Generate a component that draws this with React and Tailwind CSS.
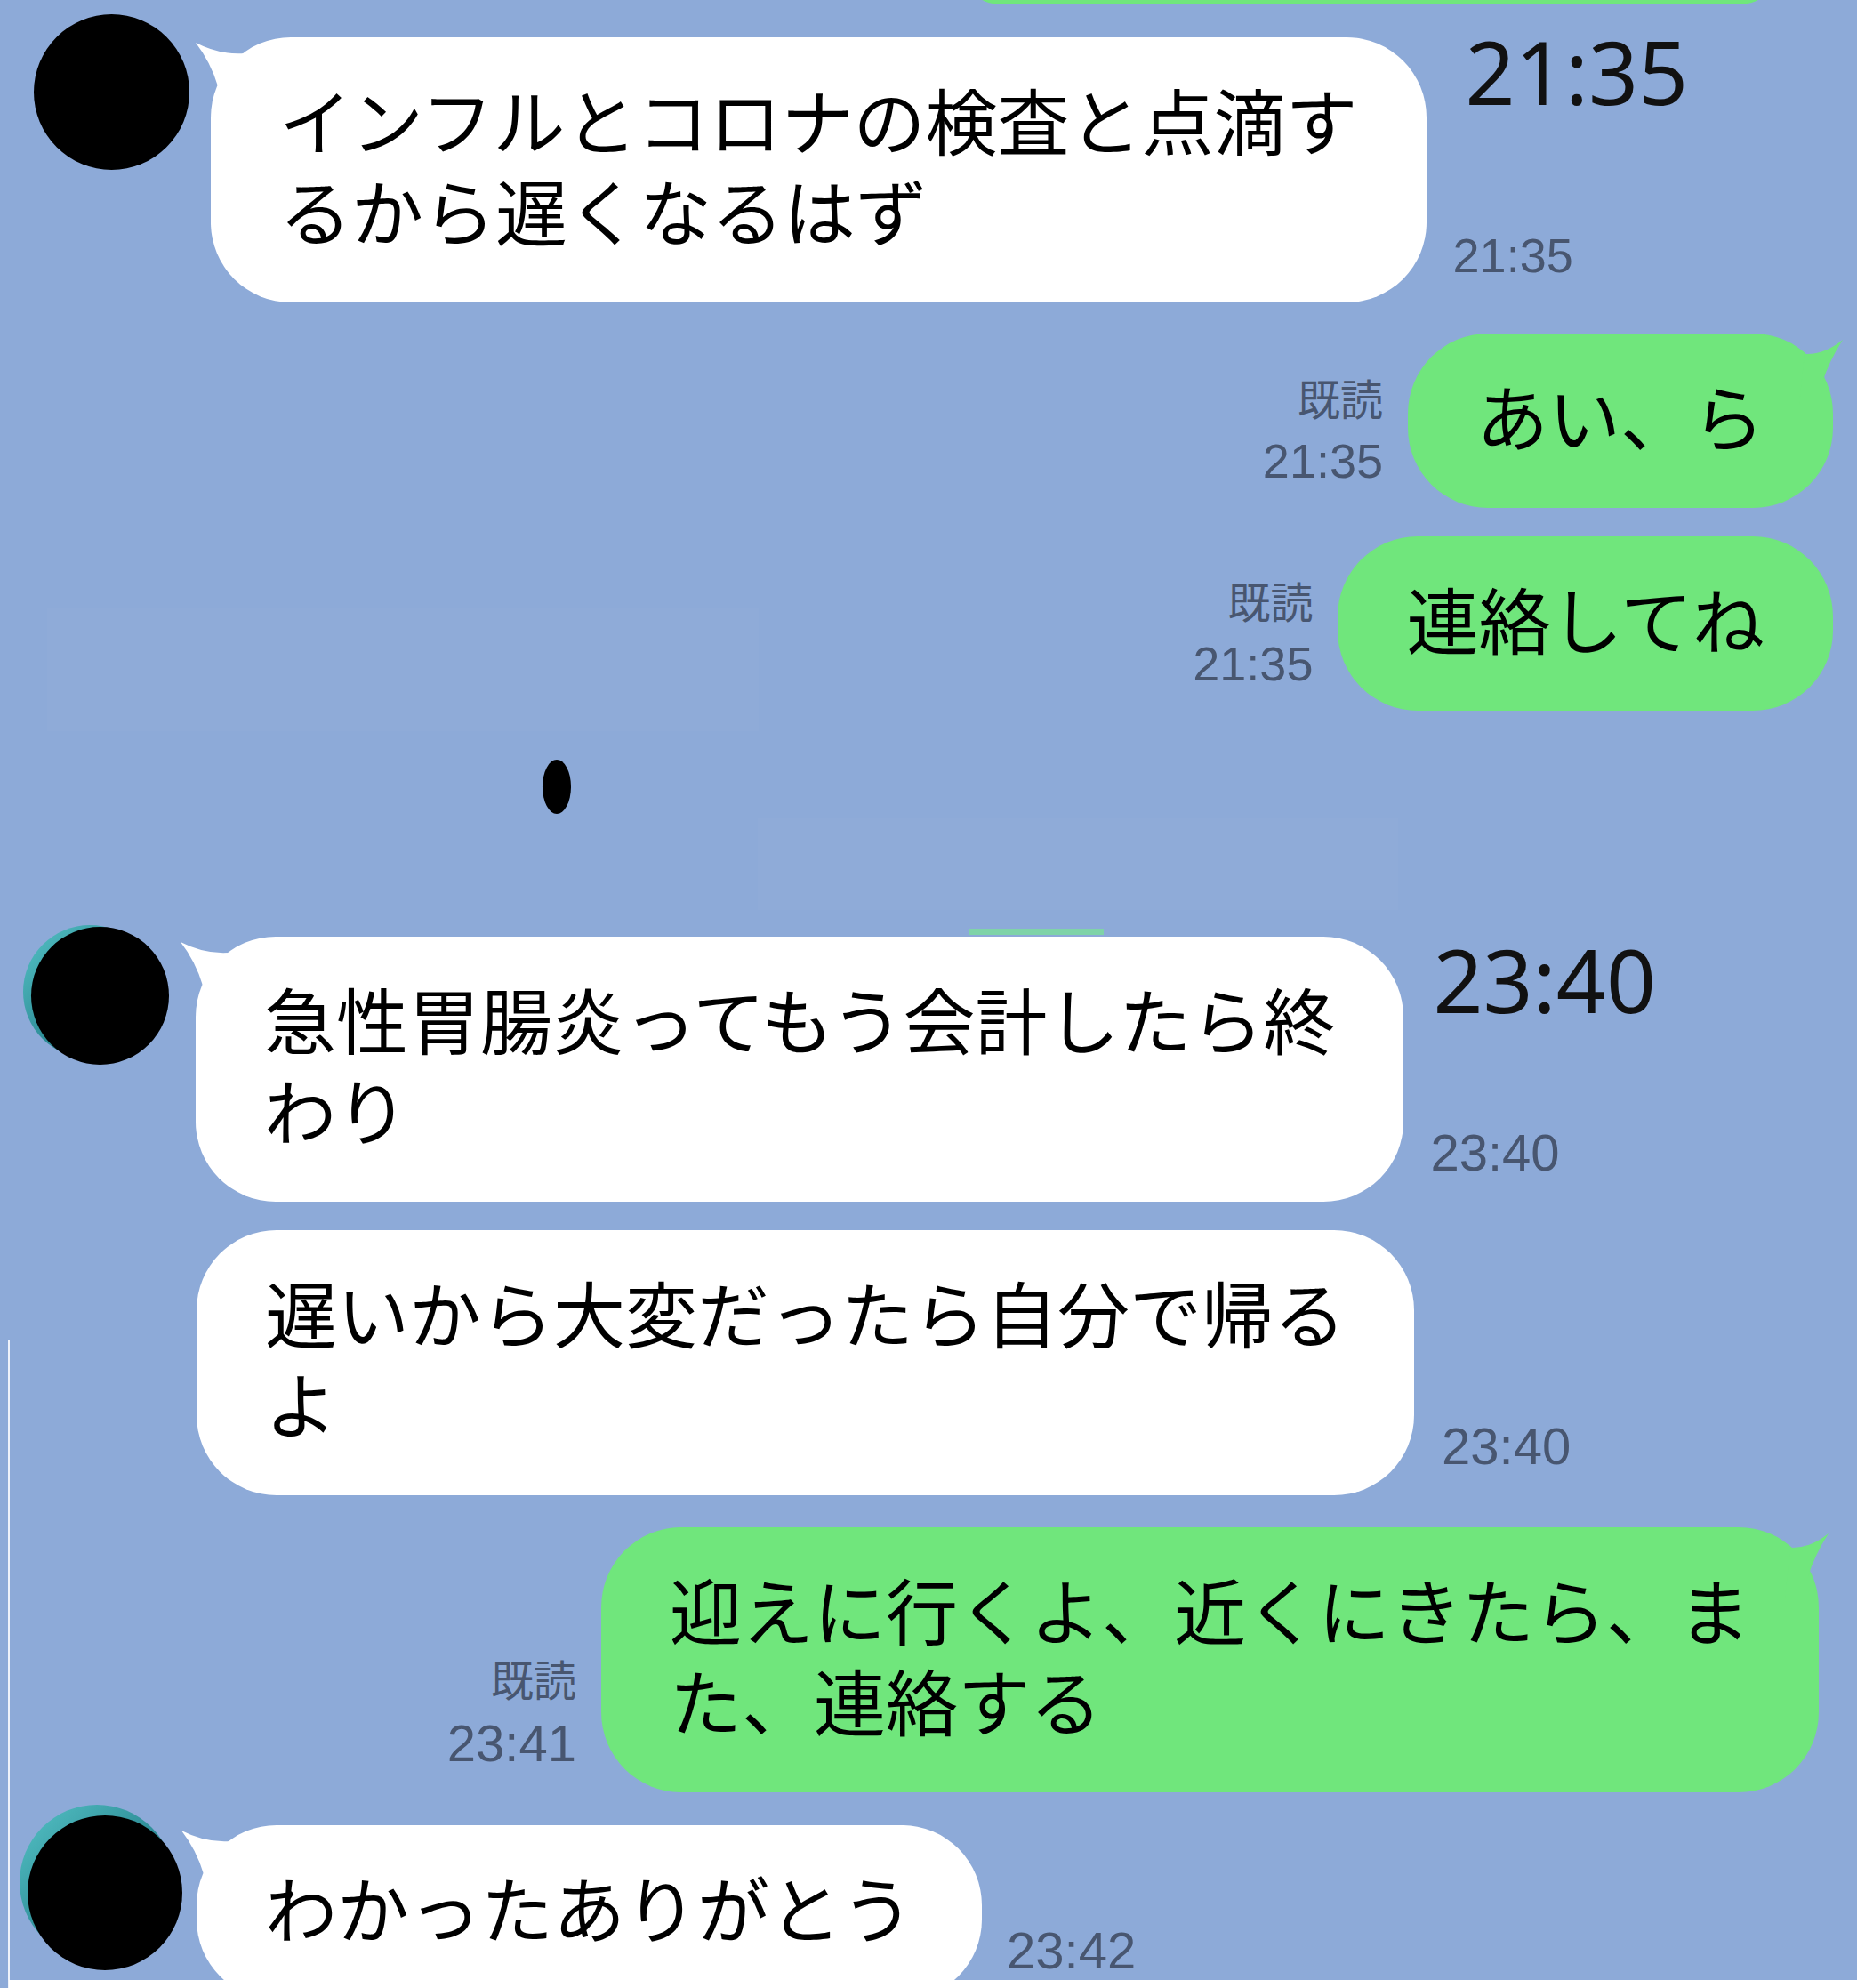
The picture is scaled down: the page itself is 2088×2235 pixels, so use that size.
import React from 'react';

const JP = "font-['Noto_Sans_CJK_JP','Noto_Sans',sans-serif]";

// little curved tail on the first bubble of a group
const Tail = ({ side }) =>
  side === 'left' ? (
    <svg className="absolute -left-[18px] top-0 overflow-visible" width="110" height="100" viewBox="0 0 110 100">
      <path d="M1,6 Q28,20 56,18 L60,80 L26,80 L26,55 Q18,28 1,6 Z" fill="#ffffff" />
    </svg>
  ) : (
    <svg className="absolute -right-[12px] top-0 overflow-visible" width="110" height="100" viewBox="0 0 110 100">
      <path d="M109,7 Q88,24 66,23 L60,80 L86,80 L86,55 Q94,30 109,7 Z" fill="#70e67c" />
    </svg>
  );

const Bubble = ({ lines, green, tail }) => (
  <div
    className={`relative shrink-0 rounded-[90px] px-[77px] pt-[40px] pb-[54px] text-[81px] leading-[102px] text-black whitespace-nowrap ${JP} ${
      green ? 'bg-[#70e67c]' : 'bg-white'
    }`}
  >
    {tail && <Tail side={green ? 'right' : 'left'} />}
    <p>
      {lines.map((l, i) => (
        <React.Fragment key={l}>
          {i > 0 && <br />}
          {l}
        </React.Fragment>
      ))}
    </p>
  </div>
);

const SmallTime = ({ children, big }) => (
  <div
    className={`mb-[26px] font-['Liberation_Sans',sans-serif] leading-none text-[#485670] ${
      big ? 'text-[58px]' : 'text-[54px]'
    }`}
  >
    {children}
  </div>
);

const BigTime = ({ children, className }) => (
  <div className={`font-['Noto_Sans',sans-serif] text-[98px] leading-none text-[#111] ${className}`}>{children}</div>
);

// 既読 + time stack on the left of my own bubbles
const Meta = ({ time, big }) => (
  <div className="mr-[28px] mb-[26px] flex flex-col items-end text-[#485670]">
    <div className={`${JP} text-[48px] leading-[56px]`}>既読</div>
    <div
      className={`mt-[17px] font-['Liberation_Sans',sans-serif] leading-none ${big ? 'text-[58px]' : 'text-[54px]'}`}
    >
      {time}
    </div>
  </div>
);

const TealAvatar = ({ size, className }) => (
  <div className={`relative shrink-0 ${size}`}>
    <div className={`absolute rounded-full bg-linear-to-br from-[#55c3c6] via-[#2f8f99] to-[#1a5860] ${className}`} />
    <div className="relative h-full w-full rounded-full bg-black" />
  </div>
);

export default function App() {
  return (
    <div className="relative h-[2235px] w-[2088px] overflow-hidden bg-[#8daad8]">
      {/* faint leftovers of the blurred screenshot */}
      <div className="absolute left-[53px] top-[683px] h-[139px] w-[800px] bg-white/[0.02]" />
      <div className="absolute left-[852px] top-[920px] h-[103px] w-[720px] bg-white/[0.02]" />

      <div className="flex flex-col">
        {/* end of previous green bubble */}
        <div className="-mt-[95px] flex justify-end pr-[83px]">
          <div className="h-[100px] w-[929px] rounded-[90px] bg-[#70e67c]" />
        </div>

        {/* 21:35 incoming */}
        <div className="mt-[11px] flex items-start pl-[38px]">
          <div className="h-[175px] w-[175px] shrink-0 rounded-full bg-black" />
          <div className="ml-[24px] mt-[26px] flex items-stretch">
            <Bubble tail lines={['インフルとコロナの検査と点滴す', 'るから遅くなるはず']} />
            <div className="ml-[30px] flex flex-col justify-between">
              <BigTime className="ml-[14px] -mt-[11px]">21:35</BigTime>
              <SmallTime>21:35</SmallTime>
            </div>
          </div>
        </div>

        <div className="mt-[35px] flex items-end justify-end pr-[27px]">
          <Meta time="21:35" />
          <Bubble green tail lines={['あい、ら']} />
        </div>

        <div className="mt-[32px] flex items-end justify-end pr-[27px]">
          <Meta time="21:35" />
          <Bubble green lines={['連絡してね']} />
        </div>

        {/* 23:40 incoming */}
        <div className="mt-[243px] flex items-start pl-[35px]">
          <TealAvatar size="h-[155px] w-[155px]" className="-left-[9px] -top-[2px] h-[150px] w-[150px]" />
          <div className="ml-[30px] mt-[11px] flex items-stretch">
            <Bubble tail lines={['急性胃腸炎ってもう会計したら終', 'わり']} />
            <div className="ml-[30px] flex flex-col justify-between">
              <BigTime className="ml-[3px] -mt-[1px]">23:40</BigTime>
              <SmallTime big>23:40</SmallTime>
            </div>
          </div>
        </div>

        <div className="mt-[32px] flex items-stretch pl-[221px]">
          <Bubble lines={['遅いから大変だったら自分で帰る', 'よ']} />
          <div className="ml-[31px] flex flex-col justify-end">
            <SmallTime big>23:40</SmallTime>
          </div>
        </div>

        <div className="mt-[36px] flex items-end justify-end pr-[43px]">
          <Meta big time="23:41" />
          <Bubble green tail lines={['迎えに行くよ、近くにきたら、ま', 'た、連絡する']} />
        </div>

        <div className="mt-[26px] flex items-start pl-[31px]">
          <TealAvatar size="h-[174px] w-[174px]" className="-left-[9px] -top-[12px] h-[174px] w-[174px]" />
          <div className="ml-[16px] mt-[11px] flex items-stretch">
            <Bubble tail lines={['わかったありがとう']} />
            <div className="ml-[28px] flex flex-col justify-end">
              <SmallTime big>23:42</SmallTime>
            </div>
          </div>
        </div>
      </div>

      {/* redaction dot and crop seams */}
      <div className="absolute left-[610px] top-[854px] h-[61px] w-[32px] rounded-[50%] bg-black" />
      <div className="absolute left-[1089px] top-[1044px] h-[7px] w-[152px] bg-[#7fd3a8]" />
      <div className="absolute left-[9px] top-[1507px] h-[728px] w-[2px] bg-[#eef2fa]" />
      <div className="absolute bottom-0 left-[10px] h-[9px] w-[2078px] bg-white" />
    </div>
  );
}
